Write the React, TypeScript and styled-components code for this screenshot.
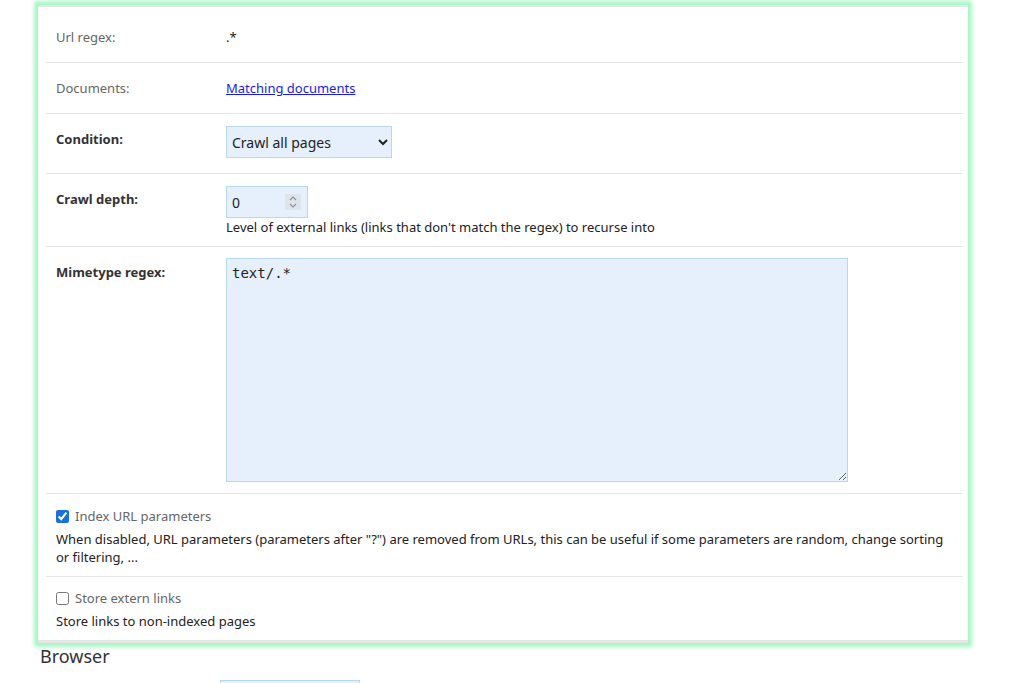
import React from 'react';
import styled, { createGlobalStyle } from 'styled-components';

const GlobalStyle = createGlobalStyle`
  body {
    margin: 0;
    background: #fff;
    font-family: "Noto Sans", "Open Sans", sans-serif;
    font-size: 13px;
    color: #222;
  }
  input[type=number]::-webkit-inner-spin-button,
  input[type=number]::-webkit-outer-spin-button {
    -webkit-appearance: none;
    margin: 0;
  }
`;

const Page = styled.div`
  padding: 5px 0 0 38px;
`;

const Panel = styled.div`
  width: 930px;
  background: #fff;
  border-top: 2px solid #e6e6e6;
  border-bottom: 3px solid #e6e6e6;
  padding: 0 5px 0 8px;
  box-sizing: border-box;
  box-shadow: 0 0 4px 4px #a3f8c3;
`;

const Row = styled.div<{ $first?: boolean }>`
  display: grid;
  grid-template-columns: 180px 1fr;
  border-bottom: 1px solid #e6e6e6;
  padding-top: ${(p) => (p.$first ? '5px' : '0')};
`;

const Label = styled.div<{ $strong?: boolean }>`
  padding: 16px 10px;
  line-height: 18px;
  font-weight: ${(p) => (p.$strong ? 700 : 400)};
  color: ${(p) => (p.$strong ? '#333' : '#666')};
`;

const Value = styled.div<{ $pad?: string }>`
  padding: ${(p) => p.$pad || '16px 0'};
  line-height: 18px;
  color: #222;
`;

const Link = styled.a`
  color: #1a1aee;
  text-decoration: underline;
`;

const Select = styled.select`
  display: block;
  width: 166px;
  height: 32px;
  background: #e6f0fd;
  border: 1px solid #b9d8ee;
  border-radius: 0;
  font-family: "Noto Sans", sans-serif;
  font-size: 14px;
  color: #222;
  padding: 0 1px;
  margin: 0;
`;

const NumberWrap = styled.div`
  position: relative;
  width: 82px;
`;

const NumberInput = styled.input`
  width: 82px;
  height: 32px;
  box-sizing: border-box;
  background: #e6f0fd;
  border: 1px solid #b9d8ee;
  font-family: "Noto Sans", sans-serif;
  font-size: 14px;
  color: #222;
  padding: 0 5px;
  margin: 0;
  display: block;
`;

const Spin = styled.span`
  position: absolute;
  top: 8px;
  right: 7px;
  width: 16px;
  height: 16px;
  background: #dfe3ea;
  display: flex;
  align-items: center;
  justify-content: center;
`;

const Help = styled.div`
  line-height: 18px;
`;

const TextArea = styled.textarea`
  display: block;
  width: 622px;
  height: 224px;
  box-sizing: border-box;
  background: #e6f0fd;
  border: 1px solid #b9d8ee;
  font-family: "DejaVu Sans Mono", monospace;
  font-size: 14px;
  color: #222;
  padding: 6px 5px;
  margin: 0;
`;

const CheckRow = styled.div<{ $last?: boolean }>`
  padding: ${(p) => (p.$last ? '12px' : '13px')} 10px 10px;
  border-bottom: ${(p) => (p.$last ? 'none' : '1px solid #e6e6e6')};
`;

const CheckLabel = styled.label`
  display: flex;
  align-items: center;
  gap: 6px;
  color: #666;
  line-height: 18px;
  input {
    width: 13px;
    height: 13px;
    margin: 0;
    accent-color: #1a6fe0;
  }
`;

const CheckHelp = styled.div`
  margin-top: 5px;
  line-height: 18px;
`;

const Heading = styled.h2`
  margin: 1px 0 0 2px;
  font-size: 18px;
  font-weight: 400;
  line-height: 24px;
  color: #333;
`;

const NextRow = styled.div`
  display: flex;
  padding: 12px 0 0 182px;
`;

const NextInput = styled.input`
  width: 140px;
  height: 32px;
  box-sizing: border-box;
  background: #e6f0fd;
  border: 1px solid #b9d8ee;
`;

export default function App() {
  return (
    <Page>
      <GlobalStyle />
      <Panel>
        <Row $first>
          <Label>Url regex:</Label>
          <Value>.*</Value>
        </Row>
        <Row>
          <Label>Documents:</Label>
          <Value>
            <Link href="#">Matching documents</Link>
          </Value>
        </Row>
        <Row>
          <Label $strong>Condition:</Label>
          <Value $pad="12px 0 15px">
            <Select defaultValue="all">
              <option value="all">Crawl all pages</option>
            </Select>
          </Value>
        </Row>
        <Row>
          <Label $strong>Crawl depth:</Label>
          <Value $pad="12px 0 10px">
            <NumberWrap>
              <NumberInput type="number" defaultValue={0} />
              <Spin>
                <svg width="10" height="14" viewBox="0 0 10 14" fill="none" stroke="#8a8f99" strokeWidth="1.1">
                  <path d="M2 5 L5 2 L8 5" />
                  <path d="M2 9 L5 12 L8 9" />
                </svg>
              </Spin>
            </NumberWrap>
            <Help>Level of external links (links that don't match the regex) to recurse into</Help>
          </Value>
        </Row>
        <Row>
          <Label $strong>Mimetype regex:</Label>
          <Value $pad="11px 0 11px">
            <TextArea defaultValue="text/.*" />
          </Value>
        </Row>
        <CheckRow>
          <CheckLabel>
            <input type="checkbox" defaultChecked />
            Index URL parameters
          </CheckLabel>
          <CheckHelp>
            When disabled, URL parameters (parameters after "?") are removed from URLs, this can be useful if some
            parameters are random, change sorting or filtering, ...
          </CheckHelp>
        </CheckRow>
        <CheckRow $last>
          <CheckLabel>
            <input type="checkbox" />
            Store extern links
          </CheckLabel>
          <CheckHelp>Store links to non-indexed pages</CheckHelp>
        </CheckRow>
      </Panel>
      <Heading>Browser</Heading>
      <NextRow>
        <NextInput />
      </NextRow>
    </Page>
  );
}
